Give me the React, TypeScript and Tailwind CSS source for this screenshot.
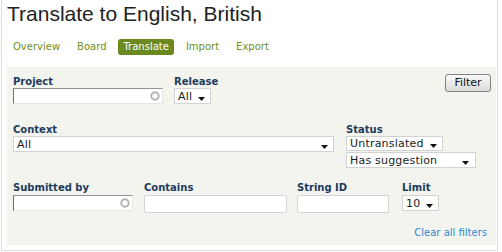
import React from "react";

function Arrow({ className = "" }: { className?: string }) {
  return (
    <svg width="7" height="4" viewBox="0 0 7 4" className={className}>
      <polygon points="0,0 7,0 3.5,4" fill="#111" />
    </svg>
  );
}

function Select({ text, w, h = "h-[16px]", pr = "pr-[5px]" }: { text: string; w: string; h?: string; pr?: string }) {
  return (
    <div className={`${w} ${h} ${pr} flex items-center justify-between border border-[#d2d2d2] bg-white pl-[3px] text-[11px] leading-[13px] tracking-[0.2px] text-[#1a1a1a]`}>
      <span>{text}</span>
      <Arrow className="mt-[5px]" />
    </div>
  );
}

function AutoInput({ w }: { w: string }) {
  return (
    <div className={`${w} h-[16px] flex items-center justify-end border border-t-[#939393] border-l-[#6e6e6e] border-r-[#e4e4e4] border-b-[#e4e4e4] bg-white pr-[2px]`}>
      <svg width="10" height="10" viewBox="0 0 10 10">
        <circle cx="5" cy="5" r="3.7" fill="none" stroke="#b4b4b4" strokeWidth="2" />
      </svg>
    </div>
  );
}

function TextInput({ w }: { w: string }) {
  return <div className={`${w} h-[18px] rounded-[2px] border border-[#d4d4d4] bg-white`} />;
}

function Label({ children }: { children: React.ReactNode }) {
  return <div className="h-[12px] text-[10px] leading-[12px] font-bold text-[#1d3b5c] whitespace-nowrap">{children}</div>;
}

export default function App() {
  return (
    <div className="w-[502px] h-[252px] bg-white font-['DejaVu_Sans',sans-serif]">
      <div className="ml-[1px] w-[497px] border-x border-b border-[#dedede] pl-[5px] pr-[1px] pb-[5px]">
        <h1 className="pt-[2px] font-['Liberation_Sans',Arial,sans-serif] text-[21px] leading-[24px] text-[#222]">
          Translate to English, British
        </h1>
        <nav className="mt-[13px] ml-[1px] flex gap-[7px] text-[10px] leading-[16px]">
          <span className="px-[5px] text-[#6f9020]">Overview</span>
          <span className="px-[5px] text-[#6f9020]">Board</span>
          <span className="rounded-[3px] bg-[#6a8a1f] px-[5px] text-white">Translate</span>
          <span className="px-[5px] text-[#6f9020]">Import</span>
          <span className="px-[5px] text-[#6f9020]">Export</span>
        </nav>
        <div className="mt-[12px] h-[178px] bg-[#f4f4ef] pl-[6px] pr-[5px] pt-[9px] pb-[6px]">
          <div className="flex items-start">
            <div className="w-[150px]">
              <Label>Project</Label>
              <AutoInput w="w-[150px]" />
            </div>
            <div className="ml-[11px]">
              <Label>Release</Label>
              <Select text="All" w="w-[37px]" />
            </div>
            <button className="ml-auto -mt-[2px] h-[18px] w-[46px] rounded-[3px] border border-[#838383] bg-gradient-to-b from-[#fafafa] to-[#dadada] text-[11px] leading-[14px] text-[#111]">
              Filter
            </button>
          </div>
          <div className="mt-[20px] flex items-start">
            <div className="w-[321px]">
              <Label>Context</Label>
              <Select text="All" w="w-[321px]" />
            </div>
            <div className="ml-[12px]">
              <Label>Status</Label>
              <Select text="Untranslated" w="w-[97px]" h="h-[15px]" />
              <div className="mt-[1px]">
                <Select text="Has suggestion" w="w-[130px]" pr="pr-[6px]" />
              </div>
            </div>
          </div>
          <div className="mt-[14px] flex items-start">
            <div className="w-[120px]">
              <Label>Submitted by</Label>
              <div className="mt-[1px]">
                <AutoInput w="w-[120px]" />
              </div>
            </div>
            <div className="ml-[11px]">
              <Label>Contains</Label>
              <div className="mt-[1px]">
                <TextInput w="w-[143px]" />
              </div>
            </div>
            <div className="ml-[10px]">
              <Label>String ID</Label>
              <div className="mt-[1px]">
                <TextInput w="w-[92px]" />
              </div>
            </div>
            <div className="ml-[13px]">
              <Label>Limit</Label>
              <div className="mt-[1px]">
                <Select text="10" w="w-[37px]" />
              </div>
            </div>
          </div>
          <div className="mt-[14px] mr-[4px] text-right text-[10px] leading-[12px] text-[#2d8ad6]">
            Clear all filters
          </div>
        </div>
      </div>
    </div>
  );
}
